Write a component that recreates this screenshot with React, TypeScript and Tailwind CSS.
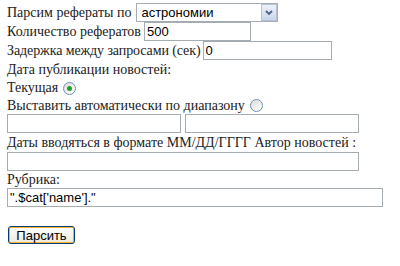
import React from "react";

const field =
  "h-[19px] border border-[#a5acb2] bg-white px-[2px] text-[13px] text-black outline-none";
const sans = { fontFamily: '"Liberation Sans", Arial, sans-serif' };

function Radio({ checked }: { checked?: boolean }) {
  return (
    <span className="ml-[5px] inline-flex h-[13px] w-[13px] items-center justify-center rounded-full border border-[#6f8fb5] bg-gradient-to-br from-[#dcdcd7] to-white">
      {checked && <span className="h-[5px] w-[5px] rounded-full bg-[#21a121]" />}
    </span>
  );
}

export default function App() {
  return (
    <div
      className="h-[266px] w-[400px] bg-white pl-[7px] pt-[3px] text-[14px] leading-[18px] text-[#222]"
      style={{ fontFamily: '"Liberation Serif", "DejaVu Serif", serif' }}
    >
      <div className="flex h-[19px] items-center">
        <span>Парсим рефераты по</span>
        <div className={`${field} ml-[5px] flex w-[142px] items-center justify-between pr-0`} style={sans}>
          <span className="pl-[2px]">астрономии</span>
          <span className="flex h-[17px] w-[16px] items-center justify-center border border-[#b6c3d6] bg-gradient-to-b from-[#eef2f9] to-[#c9d6ea]">
            <svg width="8" height="6" viewBox="0 0 8 6">
              <path d="M1 1 L4 4 L7 1" stroke="#4d6185" strokeWidth="1.8" fill="none" />
            </svg>
          </span>
        </div>
      </div>

      <div className="flex h-[19px] items-center">
        <span>Количество рефератов</span>
        <input readOnly value="500" className={`${field} ml-[3px] w-[107px]`} style={sans} />
      </div>

      <div className="flex h-[19px] items-center">
        <span className="tracking-[-0.1px]">Задержка между запросами (сек)</span>
        <input readOnly value="0" className={`${field} ml-[2px] w-[129px]`} style={sans} />
      </div>

      <div className="flex h-[19px] items-center">Дата публикации новостей:</div>

      <div className="flex h-[18px] items-center">
        <span>Текущая</span>
        <Radio checked />
      </div>

      <div className="flex h-[17px] items-center">
        <span>Выставить автоматически по диапазону</span>
        <Radio />
      </div>

      <div className="flex h-[19px] items-center gap-[4px]">
        <input readOnly className={`${field} w-[174px]`} />
        <input readOnly className={`${field} w-[174px]`} />
      </div>

      <div className="flex h-[19px] items-center">Даты вводяться в формате ММ/ДД/ГГГГ Автор новостей :</div>

      <div className="flex h-[19px] items-center">
        <input readOnly className={`${field} w-[352px]`} />
      </div>

      <div className="flex h-[17px] items-center">Рубрика:</div>

      <div className="flex h-[19px] items-center">
        <input readOnly value={`".$cat['name']."`} className={`${field} w-[376px]`} style={sans} />
      </div>

      <div className="mt-[19px] flex">
        <button
          className="ml-[1px] h-[18px] w-[67px] rounded-[3px] border border-[#003c74] bg-gradient-to-b from-white to-[#ece9d8] text-[13px] text-black shadow-[inset_0_0_0_1px_#f8b330]"
          style={sans}
        >
          Парсить
        </button>
      </div>
    </div>
  );
}
